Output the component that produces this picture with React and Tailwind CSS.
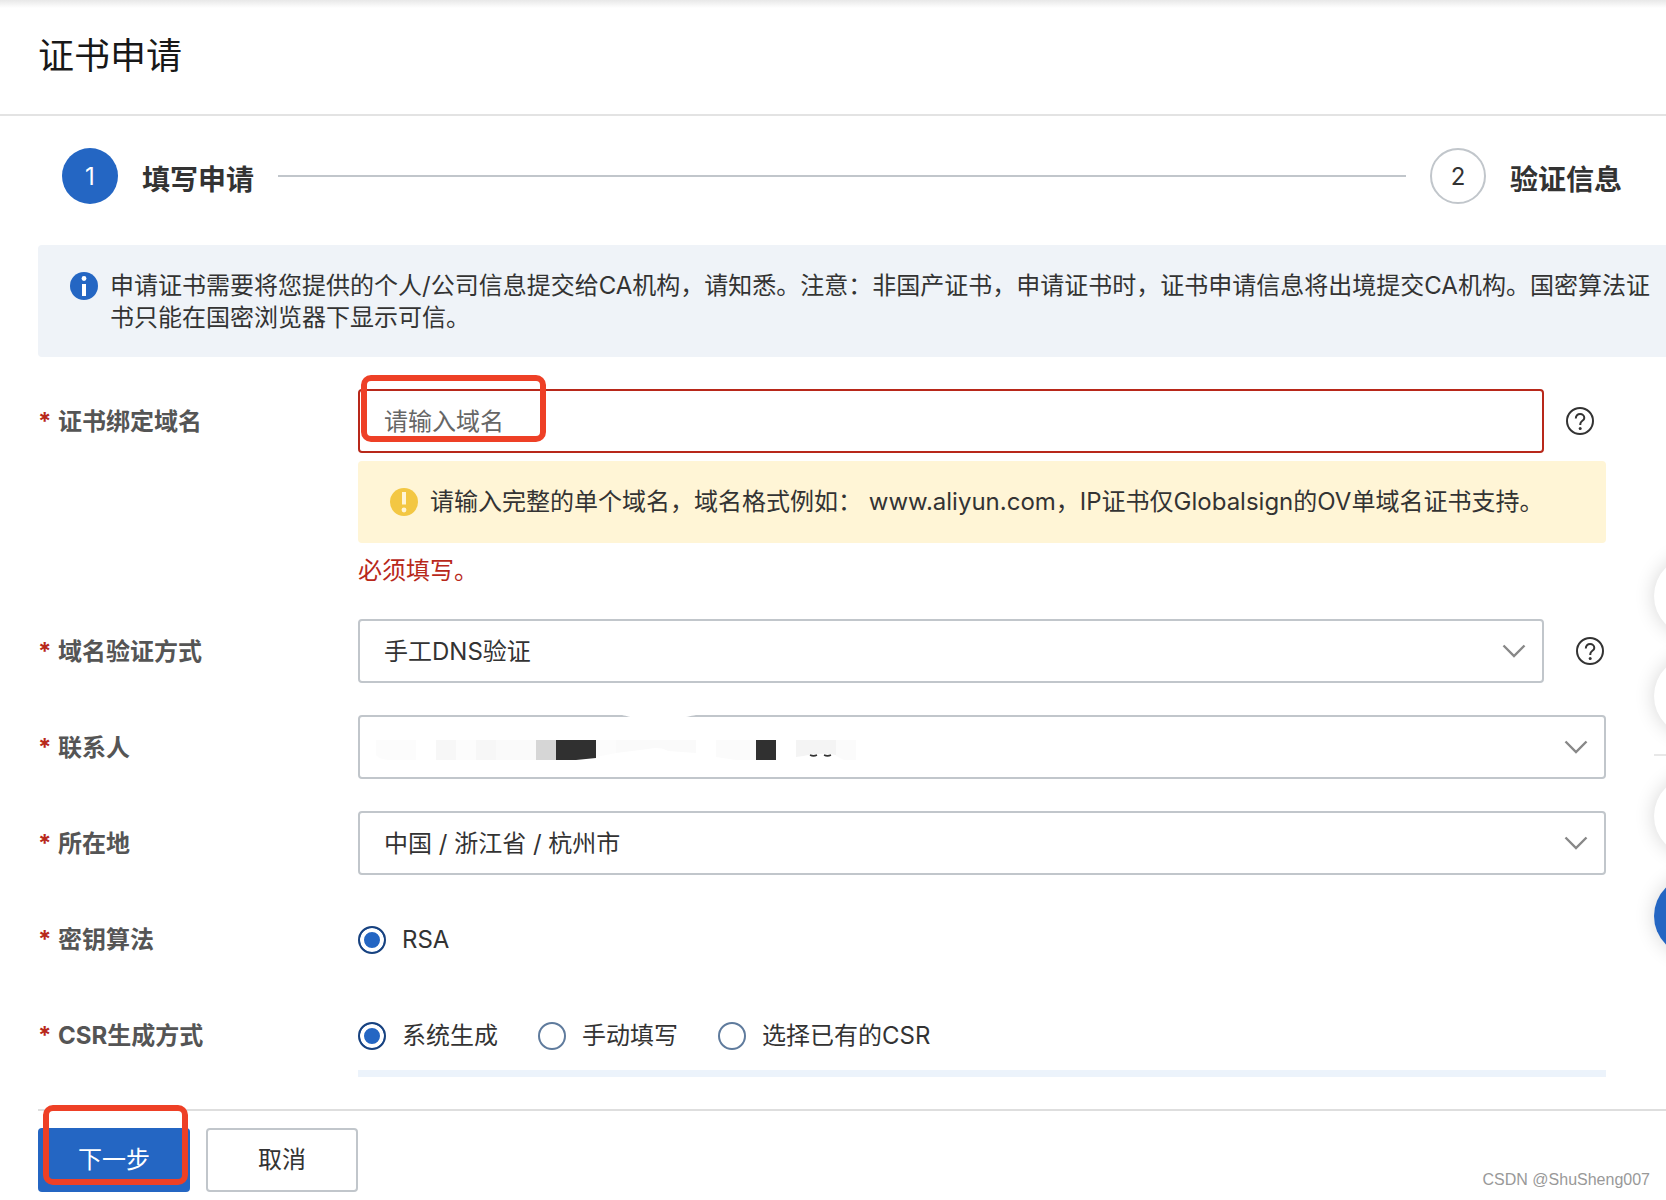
const LOCATIONS = ['中国 / 浙江省 / 杭州市'];
const CSR_OPTIONS = ['系统生成', '手动填写', '选择已有的CSR'];

const InfoIcon = () => (
  <svg viewBox="0 0 28 28" className="w-7 h-7 shrink-0" aria-hidden="true">
    <circle cx="14" cy="14" r="14" fill="#2466c3" />
    <circle cx="14" cy="6.5" r="2.4" fill="#fff" />
    <rect x="12" y="12" width="4" height="12" fill="#fff" />
  </svg>
);

const WarningIcon = () => (
  <svg viewBox="0 0 28 28" className="w-7 h-7 shrink-0" aria-hidden="true">
    <circle cx="14" cy="14" r="14" fill="#f3c743" />
    <rect x="12" y="4" width="4" height="12.5" fill="#fff5d6" />
    <circle cx="14" cy="22" r="2.4" fill="#fff5d6" />
  </svg>
);

const HelpIcon = () => (
  <svg viewBox="0 0 28 28" className="w-7 h-7" fill="none" stroke="#333" strokeWidth="2" aria-hidden="true">
    <circle cx="14" cy="14" r="13" />
    <path d="M9.8 11.4C9.8 8.8 11.6 7.1 14.1 7.1C16.5 7.1 18.3 8.7 18.3 10.9C18.3 13.9 14.3 13.6 14.3 17V18" />
    <circle cx="14.2" cy="21.5" r="1.5" fill="#333" stroke="none" />
  </svg>
);

const Chevron = () => (
  <svg
    viewBox="0 0 24 14"
    className="absolute right-[18px] top-[25px] w-6 h-3.5 pointer-events-none"
    fill="none"
    stroke="#888"
    strokeWidth="2.4"
    aria-hidden="true"
  >
    <path d="M1.5 1.5L12 12L22.5 1.5" />
  </svg>
);

// Nombre del contacto tapado con mosaico y un borrón blanco
const ContactMask = () => (
  <svg viewBox="0 0 500 64" className="absolute left-0 top-0 w-[500px] h-16 pointer-events-none" aria-hidden="true">
    <path d="M264 0C274 2 280 5 300 5C320 5 326 2 338 0Z" fill="#fff" />
    <path d="M18 25H58V45H34C26 45 20 43 18 40Z" fill="#fcfcfc" />
    <rect x="78" y="25" width="20" height="20" fill="#f7f7f7" />
    <rect x="98" y="25" width="20" height="20" fill="#fcfcfc" />
    <rect x="118" y="25" width="20" height="20" fill="#f7f7f7" />
    <rect x="138" y="25" width="40" height="20" fill="#fafafa" />
    <rect x="178" y="25" width="20" height="20" fill="#d6d6d6" />
    <path d="M198 25H238V43L218 45H198Z" fill="#303030" />
    <path d="M238 25H258V38L238 42Z" fill="#fcfcfc" />
    <path d="M258 25H338V38L310 36C302 32 296 33 290 34L258 38Z" fill="#fafafa" />
    <path d="M358 25H398V45H378L358 42Z" fill="#fbfbfb" />
    <rect x="398" y="25" width="20" height="20" fill="#303030" />
    <path d="M438 25H478V40C464 37 452 40 438 42Z" fill="#f4f4f4" />
    <path d="M478 25H498V45H486L478 41Z" fill="#fbfbfb" />
    <path d="M452 40C454 41 457 41 459 40M466 40C468 41 471 41 473 40" stroke="#333" strokeWidth="1.5" fill="none" />
  </svg>
);

const Required = () => <span className="w-5 shrink-0 text-[#b8281a]">*</span>;

const Row = ({ label, htmlFor, children }) => (
  <div className="flex items-start">
    <label htmlFor={htmlFor} className="flex w-80 h-16 shrink-0 items-center pt-0.5 font-bold text-[#555]">
      <Required />
      {label}
    </label>
    <div className="min-w-0 flex-1">{children}</div>
  </div>
);

const RadioRow = ({ label, name, options }) => (
  <div role="radiogroup" aria-label={label} className="flex items-start">
    <div className="flex w-80 h-16 shrink-0 items-center pt-0.5 font-bold text-[#555]">
      <Required />
      {label}
    </div>
    <div className="flex h-16 min-w-0 flex-1 items-center gap-10 pt-0.5">
      {options.map((option, i) => (
        <label key={option} className="flex items-center gap-4">
          <input
            type="radio"
            name={name}
            defaultChecked={i === 0}
            className="w-7 h-7 appearance-none rounded-full border-2 border-[#5f7b9d] bg-white checked:border-[#18427f] checked:bg-[#2466c3] checked:shadow-[inset_0_0_0_4px_white]"
          />
          {option}
        </label>
      ))}
    </div>
  </div>
);

const Select = ({ id, options, children }) => (
  <div className="relative flex-1">
    <select id={id} className="block w-full h-16 appearance-none rounded-sm border-2 border-[#c1c6cb] bg-white px-6 pt-0.5 text-[#333]">
      {options.map((option) => (
        <option key={option}>{option}</option>
      ))}
    </select>
    {children}
    <Chevron />
  </div>
);

// Botones flotantes que asoman por el lado derecho
const FloatingTools = () => (
  <div className="absolute top-[556px] -right-17 flex w-20 flex-col">
    <button aria-label="工具" className="w-20 h-20 rounded-full bg-white shadow-[0_0_20px_rgba(0,0,0,0.16)]" />
    <button aria-label="文档" className="mt-5 w-20 h-20 rounded-full bg-white shadow-[0_0_20px_rgba(0,0,0,0.16)]" />
    <div className="mt-[18px] h-0.5 bg-[#e8e8e8]" />
    <button aria-label="反馈" className="mt-5 w-20 h-20 rounded-full bg-white shadow-[0_0_20px_rgba(0,0,0,0.16)]" />
    <button aria-label="咨询" className="mt-5 w-20 h-20 rounded-full bg-[#2466c3] shadow-[0_0_20px_rgba(0,0,0,0.16)]" />
  </div>
);

export default function App() {
  return (
    <div className="relative min-h-screen overflow-hidden bg-white font-['Inter','Noto_Sans_CJK_SC',sans-serif] text-2xl leading-8 text-[#333]">
      <div className="absolute inset-x-0 top-0 h-2 bg-gradient-to-b from-[#e8e8e8] to-white" />

      <header className="flex h-29 items-center border-b-2 border-[#e3e3e3] pl-[38px] pb-0.5">
        <h1 className="text-4xl text-[#181818]">证书申请</h1>
      </header>

      <main className="pl-[38px]">
        {/* Pasos */}
        <ol className="flex items-center pt-8 pl-6 pr-11">
          <li className="flex flex-1 items-center gap-6">
            <span className="flex w-14 h-14 shrink-0 items-center justify-center rounded-full bg-[#2466c3] pt-0.5 text-white">1</span>
            <span className="pt-2 text-[28px] font-bold">填写申请</span>
            <span className="mr-6 h-0.5 flex-1 bg-[#c1c6cb]" />
          </li>
          <li className="flex items-center gap-6">
            <span className="flex w-14 h-14 shrink-0 items-center justify-center rounded-full border-2 border-[#c1c6cb] pt-0.5">2</span>
            <span className="pt-2 text-[28px] font-bold">验证信息</span>
          </li>
        </ol>

        <div className="mt-[41px] flex gap-3 rounded-l-sm bg-[#eff3f8] pt-[25px] pb-[23px] pl-8 pr-4">
          <div className="pt-0.5">
            <InfoIcon />
          </div>
          <p>
            申请证书需要将您提供的个人/公司信息提交给CA机构，请知悉。注意：非国产证书，申请证书时，证书申请信息将出境提交CA机构。国密算法证书只能在国密浏览器下显示可信。
          </p>
        </div>

        <form className="mt-8 flex flex-col gap-8 pr-15">
          <Row label="证书绑定域名" htmlFor="domain">
            <div className="relative flex items-center">
              <input
                id="domain"
                placeholder="请输入域名"
                className="h-16 min-w-0 flex-1 rounded-sm border-2 border-[#b8281a] px-6 placeholder:text-[#666]"
              />
              <button type="button" aria-label="帮助" className="w-[62px] pl-[22px]">
                <HelpIcon />
              </button>
              <div className="pointer-events-none absolute left-[3px] -top-3.5 w-[185px] h-[67px] rounded-[10px] border-6 border-[#ee4026]" />
            </div>
            <div className="mt-2 flex h-[82px] items-center gap-3 rounded-sm bg-[#fff5d6] pl-8">
              <WarningIcon />
              <p>请输入完整的单个域名，域名格式例如： www.aliyun.com，IP证书仅Globalsign的OV单域名证书支持。</p>
            </div>
            <p className="mt-2 pt-1 text-[#b8281a]">必须填写。</p>
          </Row>

          <Row label="域名验证方式" htmlFor="verify">
            <div className="flex items-center">
              <Select id="verify" options={['手工DNS验证']} />
              <button type="button" aria-label="帮助" className="w-[62px] pl-8">
                <HelpIcon />
              </button>
            </div>
          </Row>

          <Row label="联系人" htmlFor="contact">
            <Select id="contact" options={['']}>
              <ContactMask />
            </Select>
          </Row>

          <Row label="所在地" htmlFor="location">
            <Select id="location" options={LOCATIONS} />
          </Row>

          <RadioRow label="密钥算法" name="algorithm" options={['RSA']} />
          <div>
            <RadioRow label="CSR生成方式" name="csr" options={CSR_OPTIONS} />
            <div className="mt-[3px] ml-80 h-[7px] bg-[#ecf3fb]" />
          </div>
        </form>

        <footer className="mt-8 flex gap-4 border-t-2 border-[#dedede] pt-[17px] pb-2">
          <div className="relative">
            <button className="w-38 h-16 rounded-sm bg-[#2466c3] text-white">下一步</button>
            <div className="pointer-events-none absolute left-[5px] -top-[23px] w-[145px] h-20 rounded-[10px] border-6 border-[#ee4026]" />
          </div>
          <button className="w-38 h-16 rounded-sm border-2 border-[#c1c6cb]">取消</button>
        </footer>
      </main>

      <FloatingTools />
      <div className="absolute right-4 bottom-2 font-['Liberation_Sans',sans-serif] text-base leading-6 text-[#999]">CSDN @ShuSheng007</div>
    </div>
  );
}
